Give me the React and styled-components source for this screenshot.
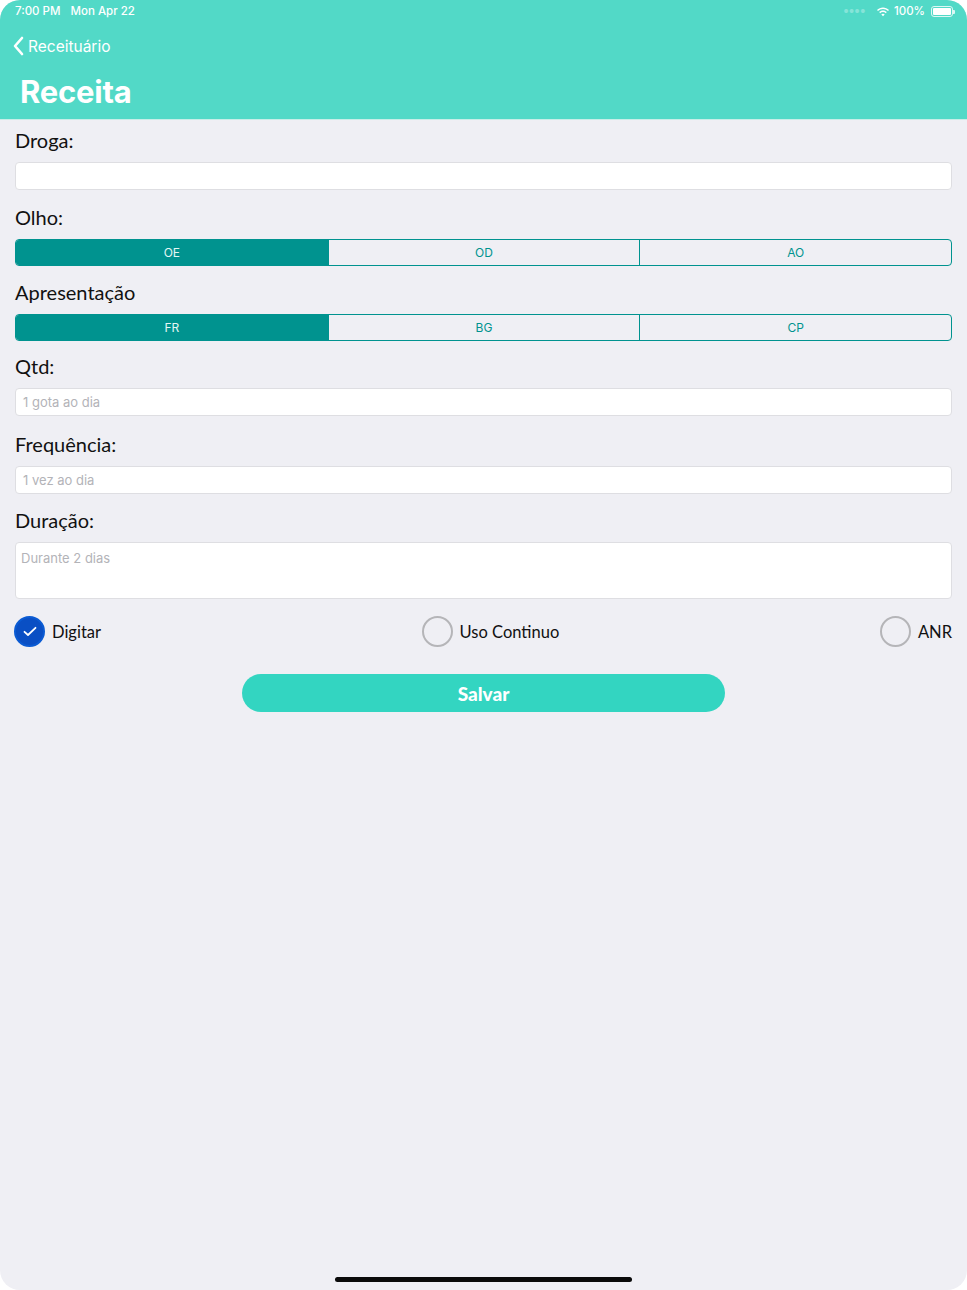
import styled, { createGlobalStyle } from "styled-components";

const GlobalStyle = createGlobalStyle`
    html, body {
        margin: 0;
        padding: 0;
        background: #ffffff;
    }
    * {
        box-sizing: border-box;
    }
`;

const Screen = styled.div`
    width: 967px;
    height: 1290px;
    border-radius: 20px;
    overflow: hidden;
    background: #efeff4;
    display: flex;
    flex-direction: column;
    font-family: Inter, "Liberation Sans", sans-serif;
`;

const Header = styled.header`
    background: #52d9c7;
    height: 120px;
    border-bottom: 1px solid #c8eee8;
    color: #fff;
    display: flex;
    flex-direction: column;
`;

const StatusBar = styled.div`
    height: 22px;
    display: flex;
    align-items: center;
    justify-content: space-between;
    padding: 0 14px 0 15px;
    font-size: 11.5px;
    font-weight: 500;
`;

const StatusLeft = styled.div`
    display: flex;
    gap: 10px;
`;

const StatusRight = styled.div`
    display: flex;
    align-items: center;
    gap: 4px;
`;

const Dots = styled.span`
    opacity: 0.3;
    font-size: 5px;
    letter-spacing: 1px;
    margin-right: 6px;
`;

const Battery = styled.span`
    width: 22px;
    height: 11px;
    border: 1px solid rgba(255, 255, 255, 0.8);
    border-radius: 3px;
    padding: 1px;
    display: flex;
    position: relative;
    margin-left: 2px;
    &::before {
        content: "";
        flex: 1;
        background: #fff;
        border-radius: 1px;
    }
    &::after {
        content: "";
        position: absolute;
        right: -3px;
        top: 3px;
        width: 2px;
        height: 4px;
        background: rgba(255, 255, 255, 0.8);
        border-radius: 0 1px 1px 0;
    }
`;

const BackLink = styled.div`
    display: flex;
    align-items: center;
    gap: 4px;
    padding: 0 0 0 12px;
    margin-top: 13px;
    font-size: 15.5px;
    height: 22px;
`;

const Title = styled.h1`
    margin: 16px 0 0 20px;
    font-size: 31px;
    font-weight: 700;
    letter-spacing: -0.2px;
`;

const Form = styled.main`
    display: flex;
    flex-direction: column;
    padding: 7px 15px 0 15px;
    flex: 1;
`;

const Label = styled.div`
    font-family: Lato, "Noto Sans", sans-serif;
    font-size: 20px;
    color: #111;
    height: 27px;
    line-height: 27px;
    margin: ${({ $mt = 13 }) => $mt}px 0 8px;
`;

const Field = styled.div`
    height: ${({ $tall }) => ($tall ? "57px" : "28px")};
    background: #fff;
    border: 1px solid #dedee2;
    border-radius: 4px;
    padding: ${({ $tall }) => ($tall ? "7px 5px" : "5px 7px")};
    font-size: 13px;
    line-height: 16px;
    color: #b3b3b8;
    font-family: Inter, "Liberation Sans", sans-serif;
`;

const Segmented = styled.div`
    display: grid;
    grid-template-columns: repeat(3, 1fr);
    height: 27px;
    border: 1px solid #00938f;
    border-radius: 4px;
    overflow: hidden;
`;

const Segment = styled.div`
    display: flex;
    align-items: center;
    justify-content: center;
    font-size: 12px;
    color: ${({ $active }) => ($active ? "#e4f6f4" : "#00938f")};
    background: ${({ $active }) => ($active ? "#00938f" : "transparent")};
    & + & {
        border-left: 1px solid #00938f;
    }
`;

const OptionRow = styled.div`
    display: flex;
    justify-content: space-between;
    align-items: center;
    margin-top: 17px;
    margin-left: -1px;
`;

const Option = styled.div`
    display: flex;
    align-items: center;
    gap: 7px;
    font-family: Lato, "Noto Sans", sans-serif;
    font-size: 16.5px;
    color: #111;
`;

const Circle = styled.span`
    width: 31px;
    height: 31px;
    border-radius: 50%;
    display: flex;
    align-items: center;
    justify-content: center;
    border: 2px solid ${({ $checked }) => ($checked ? "#0b5bd3" : "#b5b5b8")};
    background: ${({ $checked }) => ($checked ? "#0a4fc4" : "transparent")};
`;

const SaveButton = styled.button`
    align-self: center;
    margin-top: 27px;
    width: 483px;
    height: 38px;
    border: none;
    border-radius: 19px;
    background: #33d5c1;
    color: #fff;
    font-family: Lato, "Noto Sans", sans-serif;
    font-weight: 900;
    font-size: 19px;
    padding: 0;
`;

const HomeBar = styled.div`
    align-self: center;
    width: 297px;
    height: 5px;
    border-radius: 3px;
    background: #0a0a0a;
    margin-bottom: 8px;
`;

function Wifi() {
    return (
        <svg width="14" height="11" viewBox="0 0 14 11" fill="#fff">
            <path d="M7 1.5c2.3 0 4.4.9 6 2.4l-1 1.1C10.7 3.8 8.9 3 7 3S3.3 3.8 2 5L1 3.9C2.6 2.4 4.7 1.5 7 1.5z" />
            <path d="M7 4.6c1.5 0 2.8.6 3.8 1.5l-1 1.1C9.1 6.5 8.1 6.1 7 6.1s-2.1.4-2.8 1.1l-1-1.1C4.2 5.2 5.5 4.6 7 4.6z" />
            <path d="M7 7.7c.7 0 1.3.3 1.7.7L7 10.2 5.3 8.4c.4-.4 1-.7 1.7-.7z" />
        </svg>
    );
}

function Chevron() {
    return (
        <svg width="12" height="20" viewBox="0 0 12 20">
            <path d="M10 2 L3 10 L10 18" fill="none" stroke="#fff" strokeWidth="2.6" strokeLinecap="round" strokeLinejoin="round" />
        </svg>
    );
}

function Check() {
    return (
        <svg width="14" height="11" viewBox="0 0 14 11">
            <path d="M1.5 5.8 L5 9 L12.5 1.8" fill="none" stroke="#fff" strokeWidth="1.8" strokeLinecap="round" strokeLinejoin="round" />
        </svg>
    );
}

function SegmentGroup({ options, active }) {
    return (
        <Segmented>
            {options.map((o) => (
                <Segment key={o} $active={o === active}>
                    {o}
                </Segment>
            ))}
        </Segmented>
    );
}

export default function App() {
    return (
        <>
            <GlobalStyle />
            <Screen>
                <Header>
                    <StatusBar>
                        <StatusLeft>
                            <span>7:00 PM</span>
                            <span>Mon Apr 22</span>
                        </StatusLeft>
                        <StatusRight>
                            <Dots>●●●●</Dots>
                            <Wifi />
                            <span>100%</span>
                            <Battery />
                        </StatusRight>
                    </StatusBar>
                    <BackLink>
                        <Chevron />
                        <span>Receituário</span>
                    </BackLink>
                    <Title>Receita</Title>
                </Header>
                <Form>
                    <Label $mt={0}>Droga:</Label>
                    <Field />
                    <Label $mt={14}>Olho:</Label>
                    <SegmentGroup options={["OE", "OD", "AO"]} active="OE" />
                    <Label>Apresentação</Label>
                    <SegmentGroup options={["FR", "BG", "CP"]} active="FR" />
                    <Label $mt={12}>Qtd:</Label>
                    <Field>1 gota ao dia</Field>
                    <Label $mt={15}>Frequência:</Label>
                    <Field>1 vez ao dia</Field>
                    <Label>Duração:</Label>
                    <Field $tall>Durante 2 dias</Field>
                    <OptionRow>
                        <Option>
                            <Circle $checked>
                                <Check />
                            </Circle>
                            Digitar
                        </Option>
                        <Option>
                            <Circle />
                            Uso Continuo
                        </Option>
                        <Option>
                            <Circle />
                            ANR
                        </Option>
                    </OptionRow>
                    <SaveButton>Salvar</SaveButton>
                </Form>
                <HomeBar />
            </Screen>
        </>
    );
}
